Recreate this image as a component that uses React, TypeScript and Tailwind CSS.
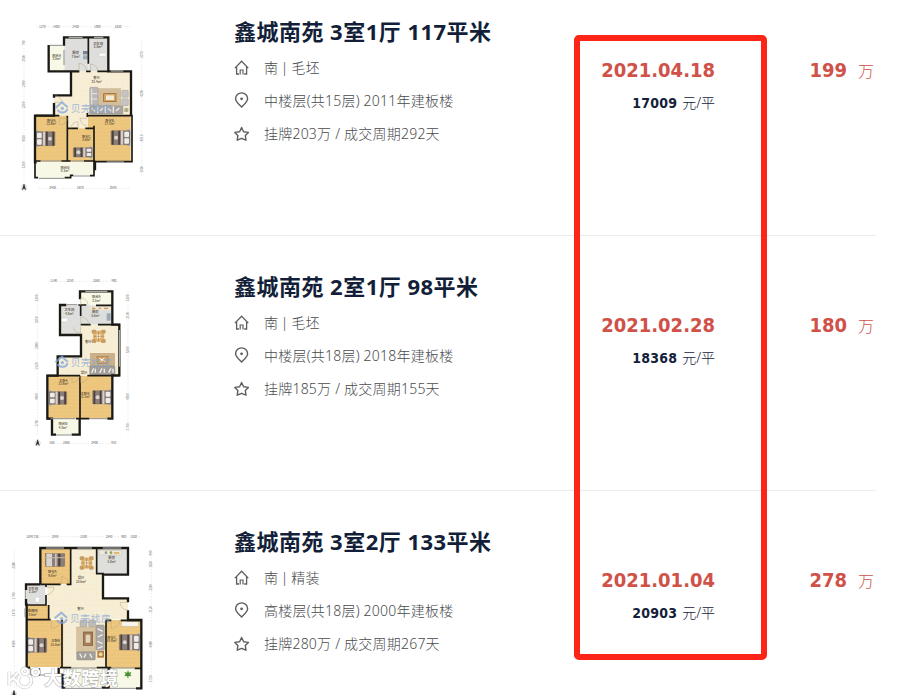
import type { ReactNode } from 'react';

type Deal = {
  title: string;
  info: string;
  floor: string;
  cycle: string;
  date: string;
  unitPrice: string;
  total: string;
  plan: ReactNode;
};

const WALL = '#1b1914';
const TILE = '#f7eed6';
const WOOD = '#efc981';
const STONE = '#dededd';
const BALCONY = '#f8f8e6';

function Label({ x, y, name, area }: { x: number; y: number; name: string; area?: string }) {
  return (
    <text x={x} y={y} textAnchor="middle" fontSize="10" fontWeight="500" fill="#4b4231">
      {name}
      {area && <tspan x={x} dy="11" fontSize="9">{area}</tspan>}
    </text>
  );
}

// Bed with the pillows on the left, flip puts them on the right
function Bed({ x, y, w = 56, h = 50, flip = false }: { x: number; y: number; w?: number; h?: number; flip?: boolean }) {
  return (
    <g transform={flip ? `translate(${x + w} ${y}) scale(-1 1)` : `translate(${x} ${y})`}>
      <rect x="-2" width="9" height={h} fill="#a5b0bc" />
      <rect y="4" width={w} height={h - 8} rx="2" fill="#8a7e79" stroke="#5a504c" />
      <rect x="2" y="7" width="14" height={h / 2 - 9} rx="3" fill="#eeeceb" />
      <rect x="2" y={h / 2 + 2} width="14" height={h / 2 - 9} rx="3" fill="#eeeceb" />
      <rect x={w * 0.36} y="4" width="6" height={h - 8} fill="#d9cfc8" />
      <rect x={w * 0.52} y="4" width="5" height={h - 8} fill="#4b3e3a" />
      <rect x={w * 0.86} y="4" width="5" height={h - 8} fill="#4b3e3a" />
      <circle cx={w * 0.73} cy={h / 2} r="6" fill="#dad4cf" />
    </g>
  );
}

function DiningTable({ x, y }: { x: number; y: number }) {
  return (
    <g transform={`translate(${x} ${y})`}>
      <rect x="-21" y="-20" width="14" height="12" rx="4" fill="#c89d63" />
      <rect x="7" y="-20" width="14" height="12" rx="4" fill="#c89d63" />
      <rect x="-21" y="8" width="14" height="12" rx="4" fill="#c89d63" />
      <rect x="7" y="8" width="14" height="12" rx="4" fill="#c89d63" />
      <circle r="16" fill="#e3b470" stroke="#a97c40" />
      <circle r="7" fill="#fbf2de" />
      <path d="M-14 0H14M0-14V14" stroke="#8f6b3a" strokeWidth="1.5" />
    </g>
  );
}

function Brand({ x, y }: { x: number; y: number }) {
  return (
    <g opacity="0.75">
      <path
        d={`M${x - 24} ${y + 1}l20-17l17 15M${x + 12} ${y + 3}a15 13 0 0 1-29 3`}
        fill="none"
        stroke="#7fa6dc"
        strokeWidth="6"
      />
      <circle cx={x - 3} cy={y + 2} r="5" fill="#7fa6dc" />
      <text x={x + 22} y={y + 12} fontSize="29" textLength="122" fill="#84a8da">贝壳找房</text>
    </g>
  );
}

function Ruler({ x1, x2, y, marks }: { x1: number; x2: number; y: number; marks: [number, string][] }) {
  return (
    <g fontSize="9" fill="#555" textAnchor="middle">
      <line x1={x1} x2={x2} y1={y} y2={y} stroke="#c4c4c4" strokeDasharray="5 4" />
      {marks.map(([x, text]) => (
        <g key={x}>
          <rect x={x - 11} y={y - 4} width="22" height="8" fill="#fff" />
          <text x={x} y={y + 3}>{text}</text>
        </g>
      ))}
    </g>
  );
}

function SideRuler({ x, y1, y2, marks }: { x: number; y1: number; y2: number; marks: [number, string][] }) {
  return (
    <g transform={`translate(${x} 0) rotate(-90)`}>
      <Ruler x1={-y2} x2={-y1} y={0} marks={marks.map(([y, t]) => [-y, t])} />
    </g>
  );
}

function Compass({ x, y }: { x: number; y: number }) {
  return (
    <g fill="none" stroke="#333" strokeWidth="1.5">
      <circle cx={x} cy={y} r="8" strokeWidth="1" stroke="#999" />
      <path d={`M${x - 5} ${y + 6}l5-17l5 17l-5-4z`} fill="#222" />
    </g>
  );
}

function FloorDefs({ id }: { id: string }) {
  return (
    <defs>
      <pattern id={`wood-${id}`} width="24" height="12" patternUnits="userSpaceOnUse">
        <rect width="24" height="12" fill={WOOD} />
        <path d="M0 0H24M0 6H24M8 0V6M19 6V12" stroke="#e5b768" strokeWidth="0.8" />
      </pattern>
      <pattern id={`tile-${id}`} width="16" height="16" patternUnits="userSpaceOnUse">
        <rect width="16" height="16" fill={TILE} />
        <path d="M0 0H16M0 0V16" stroke="#efe3c5" strokeWidth="1" />
      </pattern>
    </defs>
  );
}

const svgFont = { fontFamily: '"Noto Sans CJK SC", sans-serif' };

function PlanA() {
  return (
    <svg viewBox="0 0 450 555" className="ml-[10px] mt-[15px] h-[185px] w-[150px]" style={svgFont}>
      <FloorDefs id="a" />
      <path d="M182 168H362V300H252V340H172V302H132V240H182z" fill="url(#tile-a)" />
      <rect x="163" y="68" width="72" height="100" fill={STONE} />
      <rect x="236" y="68" width="58" height="100" fill={STONE} />
      <rect x="119" y="92" width="43" height="76" fill={BALCONY} />
      <path d="M78 302H172V440H78zM172 340H252V440H172zM234 302H362V440H234z" fill="url(#wood-a)" />
      <rect x="172" y="302" width="60" height="37" fill="url(#tile-a)" />
      <path d="M78 440H252V480H178V488H78z" fill={BALCONY} />
      {/* sofa corner */}
      <rect x="262" y="221" width="70" height="50" fill="#d3bd9b" stroke="#b59c76" />
      <rect x="281" y="236" width="37" height="24" fill="#d6a45e" stroke="#8f622b" strokeWidth="2" />
      <rect x="288" y="241" width="24" height="14" fill="#f0ead9" />
      <rect x="239" y="217" width="25" height="54" rx="3" fill="#bcb8b6" stroke="#858180" />
      <path d="M245 221V268M245 236H262M245 252H262" stroke="#e8e6e4" strokeWidth="3" />
      <rect x="239" y="272" width="100" height="25" rx="3" fill="#aaa6a2" stroke="#7e7a77" />
      <path d="M263 274V294M286 274V294M310 274V294M245 280l10 9M270 288l9-9M293 279l10 10M318 288l10-9" stroke="#efecea" strokeWidth="4" />
      <rect x="335" y="226" width="20" height="21" rx="3" fill="#c6c3c0" stroke="#8b8681" />
      <rect x="335" y="251" width="20" height="21" rx="3" fill="#c6c3c0" stroke="#8b8681" />
      <circle cx="349" cy="285" r="7" fill="#b3ad86" />
      <rect x="219" y="108" width="14" height="10" fill="#718293" />
      <rect x="219" y="121" width="14" height="12" fill="#9dacb8" />
      <rect x="267" y="115" width="21" height="8" rx="2" fill="#fff" stroke="#bbb" />
      <Bed x={79} y={346} />
      <Bed x={303} y={343} flip />
      <Bed x={190} y={394} w={56} h={36} flip />
      {/* walls */}
      <g fill="none" stroke={WALL} strokeWidth="7">
        <path d="M162 92V67H295V169H363V300M116 90V169H183V241H132V248M132 264V302H75V442H80M113 169H208" />
        <path d="M235 68V146M228 169H242M262 169H295M75 302H148M232 294V306M232 302H366V440H256V466M172 302V440M252 332V482H240M172 340H204M226 340H252M72 438H92M154 438H182M222 438H256M75 438V488H84M164 488H182V481H190" strokeWidth="5" />
      </g>
      <g fill="none" stroke="#8b8b88" strokeWidth="3">
        <path d="M120 91H158M92 438H154M184 438H222M86 490H164M190 483H240M162 105V150" />
      </g>
      <g fill="none" stroke="#c9c9c4" strokeWidth="3">
        <path d="M176 67H218M252 67H280M302 168H340M290 441H342" />
      </g>
      <g fill="none" stroke="#b4a67e" strokeWidth="1.5">
        <path d="M207 168V145A23 23 0 0 1 230 168M242 168V147A21 21 0 0 1 263 168M148 304V328M150 310H172A22 22 0 0 1 150 330M231 310H210A22 22 0 0 0 231 332M132 262H156A24 20 0 0 0 136 242M204 340V320A22 20 0 0 0 183 340" />
      </g>
      <Label x={140} y={125} name="阳台A" area="3.8m²" />
      <Label x={197} y={117} name="厨房" area="7.6m²" />
      <Label x={264} y={89} name="卫生间" area="5.8m²" />
      <Label x={260} y={193} name="客厅" area="32.4m²" />
      <Label x={124} y={320} name="卧室A" area="13.8m²" />
      <Label x={299} y={320} name="卧室B" area="17.1m²" />
      <Label x={229} y={368} name="卧室C" area="8.6m²" />
      <Label x={165} y={461} name="阳台B" area="8.1m²" />
      <Brand x={160} y={278} />
      <Ruler x1={78} x2={362} y={35} marks={[[97, '1270'], [139, '1400'], [197, '2450'], [262, '1900'], [324, '2330']]} />
      <Ruler x1={84} x2={362} y={520} marks={[[128, '3400'], [211, '2670'], [309, '3540']]} />
      <SideRuler x={42} y1={68} y2={500} marks={[[84, '790'], [130, '2500'], [206, '2390'], [270, '2200'], [370, '4510'], [450, '1300']]} />
      <SideRuler x={395} y1={68} y2={485} marks={[[119, '3370'], [235, '4290'], [369, '4510'], [463, '1500']]} />
      <Compass x={42} y={518} />
    </svg>
  );
}

function PlanB() {
  return (
    <svg viewBox="0 0 390 555" className="ml-[20px] mt-[34px] h-[185px] w-[130px]" style={svgFont}>
      <FloorDefs id="b" />
      <path d="M182 164H297V316H115V260H182z" fill="url(#tile-b)" />
      <rect x="182" y="66" width="93" height="40" fill={BALCONY} />
      <rect x="182" y="106" width="92" height="58" fill={STONE} />
      <rect x="120" y="106" width="62" height="88" fill={STONE} />
      <path d="M84 317H274V445H84z" fill="url(#wood-b)" />
      <rect x="98" y="446" width="80" height="47" fill={BALCONY} />
      <DiningTable x={236} y={199} />
      <rect x="211" y="250" width="73" height="38" fill="#cbb08b" stroke="#a88a62" />
      <rect x="231" y="260" width="33" height="20" fill="#d6a25b" stroke="#7d5221" />
      <path d="M238 265l17 9M241 274l12-10" stroke="#fff" strokeWidth="3" />
      <rect x="209" y="288" width="76" height="26" rx="3" fill="#a19e9b" stroke="#777" />
      <path d="M215 309l6-14M226 296v12M239 309l7-14M253 296v12M266 308l7-13M279 296v12" stroke="#eeecea" strokeWidth="4" />
      <rect x="210" y="110" width="62" height="10" fill="#efe5cf" />
      <path d="M216 115h10M236 115h6M252 115h12" stroke="#c99a57" strokeWidth="4" />
      <rect x="260" y="130" width="12" height="22" fill="#9aa9b6" />
      <rect x="124" y="145" width="18" height="10" rx="2" fill="#fff" stroke="#bbb" />
      <Bed x={88} y={361} w={52} h={46} />
      <Bed x={218} y={358} w={55} h={48} flip />
      <g fill="none" stroke={WALL} strokeWidth="7">
        <path d="M180 88V64H277V164H298V316H277V446H262M139 105H120V195H183V259H113V317H82V446H96V494H108M155 494H179V446" />
        <path d="M175 105H199M228 106H277M182 106V138M182 164H212M234 164H299M81 317H180M202 317H299M180 317V446M81 446H90M168 446H208" strokeWidth="5" />
      </g>
      <g fill="none" stroke="#8b8b88" strokeWidth="3">
        <path d="M140 104H172M208 446H262M92 446H166M108 495H155" />
      </g>
      <g fill="none" stroke="#c9c9c4" strokeWidth="3">
        <path d="M196 64H262M298 180V290" />
      </g>
      <g fill="none" stroke="#b4a67e" strokeWidth="1.5">
        <path d="M182 106V84A20 22 0 0 1 204 104M182 165V140A24 24 0 0 1 206 163M182 170V190A24 22 0 0 1 160 172M156 317V338A24 24 0 0 0 178 319M182 318V338A24 22 0 0 0 205 318" />
      </g>
      <Label x={229} y={84} name="阳台A" area="3.5m²" />
      <Label x={226} y={130} name="厨房" area="5.6m²" />
      <Label x={148} y={124} name="卫生间" area="4.8m²" />
      <Label x={205} y={219} name="客厅" />
      <Label x={192} y={311} name="餐厅" />
      <Label x={130} y={335} name="主卧A" area="13.9m²" />
      <Label x={195} y={374} name="主卧B" area="12.2m²" />
      <Label x={129} y={466} name="阳台B" area="4.0m²" />
      <Brand x={130} y={276} />
      <Ruler x1={85} x2={296} y={34} marks={[[101, '1140'], [150, '2250'], [229, '3260'], [282, '900']]} />
      <Ruler x1={85} x2={292} y={520} marks={[[96, '550'], [139, '2860'], [224, '3400'], [281, '910']]} />
      <SideRuler x={52} y1={66} y2={494} marks={[[84, '1300'], [150, '3250'], [227, '2080'], [288, '2120'], [380, '4500'], [460, '1700']]} />
      <SideRuler x={324} y1={66} y2={494} marks={[[84, '1300'], [136, '2100'], [240, '5200'], [380, '4500'], [470, '1700']]} />
      <Compass x={53} y={520} />
    </svg>
  );
}

function PlanC() {
  return (
    <svg viewBox="0 0 495 510" className="mt-[34px] h-[170px] w-[165px]" style={svgFont}>
      <FloorDefs id="c" />
      <path d="M212 70H290V147H306V222H384V283H318V430H190V283H142V180H212z" fill="url(#tile-c)" />
      <path d="M122 70H212V178H122zM80 240H145V285H80zM80 285H190V426H80zM318 285H422V430H318z" fill="url(#wood-c)" />
      <rect x="78" y="180" width="58" height="58" fill={STONE} />
      <rect x="290" y="72" width="91" height="74" fill={STONE} />
      <rect x="190" y="430" width="128" height="55" fill={BALCONY} />
      <rect x="318" y="430" width="102" height="58" fill={BALCONY} />
      <DiningTable x={260} y={114} />
      <rect x="230" y="306" width="57" height="76" fill="#d8c3a0" stroke="#b59c76" />
      <rect x="250" y="321" width="28" height="40" fill="#a67d58" stroke="#7b583a" strokeWidth="2" />
      <rect x="257" y="329" width="14" height="24" fill="#e2d5bd" />
      <rect x="240" y="286" width="21" height="19" rx="3" fill="#bfbbb8" stroke="#8b8681" />
      <rect x="266" y="286" width="21" height="19" rx="3" fill="#bfbbb8" stroke="#8b8681" />
      <rect x="288" y="300" width="25" height="76" rx="3" fill="#aca8a3" stroke="#7b7875" />
      <path d="M292 311l16 8M308 329l-15 7M292 349l16 7M308 364l-15 6" stroke="#efecea" strokeWidth="4" />
      <rect x="230" y="380" width="56" height="25" rx="3" fill="#a39f9a" stroke="#7b7875" />
      <path d="M239 386l7 12M258 386l-6 12M269 386l7 12" stroke="#efecea" strokeWidth="4" />
      <rect x="292" y="378" width="20" height="20" fill="#b57a3a" />
      <circle cx="302" cy="388" r="6" fill="#ead8a0" />
      <rect x="297" y="76" width="68" height="14" fill="#efe9da" stroke="#b5ae9c" />
      <circle cx="318" cy="83" r="4" fill="#8b9ba5" />
      <circle cx="333" cy="83" r="4" fill="#8ba34d" />
      <path d="M342 84h16" stroke="#d5a13b" strokeWidth="4" />
      <rect x="106" y="216" width="12" height="16" rx="4" fill="#fff" stroke="#bbb" />
      <rect x="365" y="290" width="50" height="14" fill="#f6f3ec" stroke="#b5a98f" />
      <Bed x={83} y={336} w={57} h={50} />
      <Bed x={358} y={325} w={60} h={54} flip />
      <g transform="translate(136 86)">
        <rect width="58" height="38" fill="#8a7e79" stroke="#5a504c" />
        <rect x="3" width="17" height="38" fill="#d8d4d1" />
        <rect x="29" width="5" height="38" fill="#cfc4bd" />
        <rect x="39" width="6" height="38" fill="#4b3e3a" />
        <path d="M0 12H58" stroke="#c9b9ab" strokeWidth="3" />
      </g>
      <g fill="none" stroke={WALL} strokeWidth="7">
        <path d="M121 178V69H384V149H309V220H384V232M384 256V285H424V490H408M121 178H78V195M78 222V238H80V290V428H90M176 428V450H188V488H196M305 488H326V426" />
        <path d="M212 69V178H200M121 178H182M138 178V186M138 210V240H76M146 240V284M78 284H152M186 284V428M290 72V146H312M318 284V430M318 286H334M362 286H424M180 428H214M290 428H334M404 430H424M118 430V452" strokeWidth="5" />
      </g>
      <g fill="none" stroke="#8b8b88" strokeWidth="3">
        <path d="M76 195V222M75 250V276M92 428V450H176M214 429H290M332 429H404M196 490H304M328 490H408" />
      </g>
      <g fill="none" stroke="#c9c9c4" strokeWidth="3">
        <path d="M138 69H192M232 69H276M308 69H364" />
      </g>
      <g fill="none" stroke="#b4a67e" strokeWidth="1.5">
        <path d="M184 178V154A24 24 0 0 1 206 176M138 187H162A23 23 0 0 1 140 209M154 286V310A28 26 0 0 0 183 286M334 286V310A28 26 0 0 0 360 286M384 232H360A22 24 0 0 0 384 255" />
      </g>
      <g fill="#4c8f35">
        <path d="M384 436l3 7l7-2l-3 7l3 6l-8-1l-2 8l-3-8l-8 1l4-7l-4-6l8 2z" />
        <circle cx="208" cy="455" r="6" />
      </g>
      <Label x={157} y={145} name="卧室A" area="9.8m²" />
      <Label x={335} y={103} name="厨房" area="5.8m²" />
      <Label x={243} y={162} name="餐厅" area="20.6m²" />
      <Label x={99} y={194} name="卫生间" area="3.2m²" />
      <Label x={98} y={262} name="衣帽间" area="3.6m²" />
      <Label x={242} y={256} name="客厅" />
      <Label x={167} y={352} name="主卧B" area="15.6m²" />
      <Label x={335} y={341} name="卧室C" area="14.6m²" />
      <Brand x={188} y={279} />
      <Ruler x1={82} x2={420} y={35} marks={[[97, '1290 720'], [165, '2890'], [251, '2380'], [327, '2340'], [371, '900'], [401, '1020']]} />
      <SideRuler x={43} y1={72} y2={488} marks={[[121, '3380'], [212, '1790'], [263, '1470'], [357, '4480'], [460, '1700']]} />
      <SideRuler x={454} y1={72} y2={488} marks={[[84, '990'], [118, '1820'], [187, '2240'], [253, '2120'], [358, '4480'], [462, '1720']]} />
      <Compass x={42} y={507} />
      {/* publisher watermark over the drawing */}
      <g fill="none" stroke="#8b8b8b" strokeOpacity="0.45" strokeWidth="11" strokeLinejoin="round">
        <path d="M28 440V482M31 467L53 443M38 462Q55 466 55 482M61 452A20 20 0 1 0 85 450" />
        <circle cx="75" cy="439" r="9" />
        <circle cx="107" cy="441" r="10" />
      </g>
      <g fill="none" stroke="#fff" strokeWidth="7" strokeLinejoin="round">
        <path d="M28 440V482M31 467L53 443M38 462Q55 466 55 482M61 452A20 20 0 1 0 85 450" />
        <circle cx="75" cy="439" r="9" />
        <circle cx="107" cy="441" r="10" />
      </g>
      <text
        x="132"
        y="481"
        fontSize="54"
        fontWeight="700"
        textLength="222"
        fill="#fff"
        stroke="#808080"
        strokeOpacity="0.55"
        strokeWidth="4"
        paintOrder="stroke"
      >
        大数跨境
      </text>
    </svg>
  );
}

function HomeIcon() {
  return (
    <svg viewBox="0 0 16 16" className="h-4 w-4" fill="none" stroke="#5c5f61" strokeWidth="1.3">
      <path d="M.9 8.1L7.6 1.3L14.3 8.1M2.6 6.8V14H5M12.6 6.8V14H10.2" />
      <path d="M6.2 14.6V10H9V14.6" strokeWidth="1.2" />
    </svg>
  );
}

function PinIcon() {
  return (
    <svg viewBox="0 0 16 16" className="-mt-[2px] h-4 w-4" fill="none" stroke="#5c5f61" strokeWidth="1.4">
      <path d="M7.6 15C5.2 12.4 1.6 9.8 1.6 6.7A6 5.8 0 0 1 13.6 6.7C13.6 9.8 10 12.4 7.6 15Z" />
      <circle cx="7.6" cy="6.8" r="1.4" fill="#5c5f61" stroke="none" />
    </svg>
  );
}

function StarIcon() {
  return (
    <svg viewBox="0 0 16 16" className="h-4 w-4" fill="none" stroke="#5c5f61" strokeWidth="1.4" strokeLinejoin="round">
      <path d="M7.6 1.5L9.6 5.7L14.4 6.4L11.3 9.6L12 14.2L7.6 12.3L3.2 14.2L3.9 9.6L.8 6.4L5.6 5.7Z" />
    </svg>
  );
}

const deals: Deal[] = [
  {
    title: '鑫城南苑 3室1厅 117平米',
    info: '南 | 毛坯',
    floor: '中楼层(共15层) 2011年建板楼',
    cycle: '挂牌203万 / 成交周期292天',
    date: '2021.04.18',
    unitPrice: '17009',
    total: '199',
    plan: <PlanA />,
  },
  {
    title: '鑫城南苑 2室1厅 98平米',
    info: '南 | 毛坯',
    floor: '中楼层(共18层) 2018年建板楼',
    cycle: '挂牌185万 / 成交周期155天',
    date: '2021.02.28',
    unitPrice: '18368',
    total: '180',
    plan: <PlanB />,
  },
  {
    title: '鑫城南苑 3室2厅 133平米',
    info: '南 | 精装',
    floor: '高楼层(共18层) 2000年建板楼',
    cycle: '挂牌280万 / 成交周期267天',
    date: '2021.01.04',
    unitPrice: '20903',
    total: '278',
    plan: <PlanC />,
  },
];

function DetailLine({ icon, text, tight = false }: { icon: ReactNode; text: string; tight?: boolean }) {
  return (
    <li className="flex h-[33px] items-center gap-[14px]">
      {icon}
      <span
        className={`text-[14px] font-light whitespace-nowrap text-[#484b4d] ${
          tight ? 'tracking-[0.1px] [word-spacing:-1px]' : 'tracking-[0.22px]'
        }`}
      >
        {text}
      </span>
    </li>
  );
}

function DealRow({ deal, first, last }: { deal: Deal; first: boolean; last: boolean }) {
  return (
    <article className={`flex w-[876px] shrink-0 ${first ? 'h-[236px]' : 'h-[255px]'} ${last ? '' : 'border-b border-[#ececec]'}`}>
      <div className="w-[234px] shrink-0">{deal.plan}</div>
      <div className={`w-[340px] shrink-0 ${first ? 'pt-[15px]' : 'pt-[34px]'}`}>
        <h2 className="h-8 text-[22px] leading-8 font-bold tracking-[0.48px] whitespace-nowrap text-[#131f38]">{deal.title}</h2>
        <ul className="mt-1">
          <DetailLine icon={<HomeIcon />} text={deal.info} tight />
          <DetailLine icon={<PinIcon />} text={deal.floor} />
          <DetailLine icon={<StarIcon />} text={deal.cycle} />
        </ul>
      </div>
      <div className={`w-[141px] shrink-0 text-right ${first ? 'pt-[55px]' : 'pt-[74px]'}`}>
        <p className="h-[30px] font-['DejaVu_Sans_Condensed','DejaVu_Sans',sans-serif] text-[20px] leading-[30px] font-bold [font-stretch:condensed] text-[#cf5148]">
          {deal.date}
        </p>
        <p className="mt-2 h-5 text-[14px] leading-5 whitespace-nowrap text-[#14213b]">
          <b className="font-['DejaVu_Sans_Condensed','DejaVu_Sans',sans-serif] tracking-[0.2px] [font-stretch:condensed]">{deal.unitPrice}</b>
          <span className="ml-[5px] font-light">元/平</span>
        </p>
      </div>
      <div className={`flex h-[86px] w-[159px] shrink-0 items-baseline justify-end text-[#cf5148] ${first ? 'pt-[55px]' : 'pt-[74px]'}`}>
        <b className="font-['DejaVu_Sans_Condensed','DejaVu_Sans',sans-serif] text-[20px] leading-[30px] [font-stretch:condensed]">{deal.total}</b>
        <span className="ml-[11px] text-[16px] leading-[30px] font-light">万</span>
      </div>
    </article>
  );
}

export default function App() {
  return (
    <main className="relative flex h-[695px] w-[902px] flex-col overflow-hidden bg-white font-['Noto_Sans','Noto_Sans_CJK_SC',sans-serif]">
      {deals.map((deal, i) => (
        <DealRow key={deal.title} deal={deal} first={i === 0} last={i === deals.length - 1} />
      ))}
      {/* Highlight around the deal dates */}
      <div className="pointer-events-none absolute top-[35px] left-[574px] h-[625px] w-[193px] rounded-[5px] border-[6px] border-[#fc2517]" />
    </main>
  );
}
